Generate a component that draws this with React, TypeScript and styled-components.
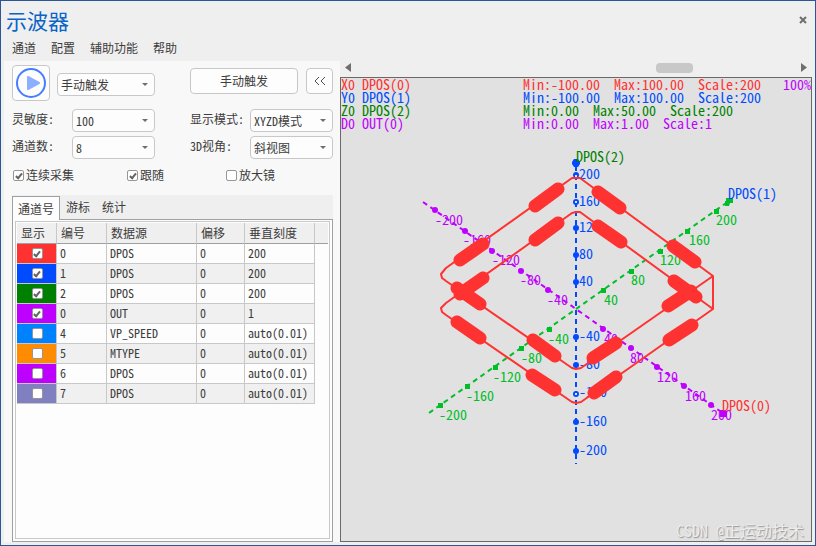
import React from "react";
import styled, { createGlobalStyle } from "styled-components";

const RED = "#ff3232";
const BLUE = "#004bff";
const GREEN = "#008000";
const AXIS_GREEN = "#00be28";
const PURPLE = "#be00ff";

const Global = createGlobalStyle`
  *, *::before, *::after { box-sizing: border-box; }
  body { margin: 0; }
  body, button, select, input {
    font-family: "Noto Sans CJK SC", "Liberation Sans", sans-serif;
    font-size: 12px;
    line-height: 16px;
    font-feature-settings: "hwid" 1;
    color: #3c3c3c;
  }
`;

const Window = styled.div`
  min-height: 100vh;
  display: flex;
  flex-direction: column;
  padding: 0 3px 3px;
  background: #efefef;
  border: 1px solid #2b579a;
`;

const TitleBar = styled.header`
  display: flex;
  align-items: center;
  justify-content: space-between;
  height: 38px;
  padding: 0 3px 0 2px;
`;

const Title = styled.h1`
  margin: 0;
  font-size: 21px;
  line-height: 28px;
  font-weight: 400;
  color: #0a64c8;
`;

const CloseButton = styled.button`
  display: grid;
  place-items: center;
  width: 12px;
  height: 12px;
  padding: 0;
  border: 0;
  background: none;
`;

const MenuBar = styled.nav`
  display: flex;
  gap: 15px;
  height: 22px;
  padding: 1px 8px 0;
`;

const MenuItem = styled.button`
  padding: 0;
  height: 16px;
  border: 0;
  background: none;
`;

const Main = styled.main`
  flex: 1;
  display: grid;
  grid-template-columns: 336px minmax(0, 1fr);
`;

const Sidebar = styled.section`
  display: flex;
  flex-direction: column;
  padding: 4px 7px 0 8px;
  background: #f8f8f8;
`;

const ControlRow = styled.div<{ $gap: number }>`
  display: grid;
  grid-template-columns: 143px 143px;
  justify-content: space-between;
  margin-bottom: ${(p) => p.$gap}px;
`;

const Group = styled.div<{ $top?: number }>`
  display: flex;
  align-items: ${(p) => (p.$top ? "flex-start" : "center")};
  justify-content: space-between;
  padding-top: ${(p) => p.$top ?? 0}px;
`;

const PushButton = styled.button<{ $width: number; $height: number }>`
  display: grid;
  place-items: center;
  width: ${(p) => p.$width}px;
  height: ${(p) => p.$height}px;
  padding: 0;
  border: 1px solid #c8c8c8;
  border-radius: 4px;
  background: #fdfdfd;
`;

const FieldLabel = styled.label`
  line-height: 20px;
  padding-bottom: 3px;
`;

const ComboBox = styled.span<{ $width: number; $top?: number }>`
  position: relative;
  display: block;
  width: ${(p) => p.$width}px;
  margin-top: ${(p) => p.$top ?? 0}px;

  &::after {
    content: "";
    position: absolute;
    right: 7px;
    top: 10px;
    border: 3px solid transparent;
    border-top-color: #6e6e6e;
    border-bottom: 0;
    pointer-events: none;
  }
`;

const Select = styled.select`
  appearance: none;
  display: block;
  width: 100%;
  height: 23px;
  padding: 0 12px 0 3px;
  border: 1px solid #c8c8c8;
  border-radius: 4px;
  background: #fdfdfd;
`;

const CheckRow = styled.div`
  display: grid;
  grid-template-columns: 114px 99px 1fr;
  padding: 0 0 0 1px;
  margin-top: 4px;
`;

const CheckLabel = styled.label`
  display: flex;
  align-items: center;
  gap: 2px;
`;

const CheckBox = styled.input`
  appearance: none;
  display: grid;
  flex: none;
  place-items: center;
  width: 11px;
  height: 11px;
  margin: 0;
  border: 1px solid #969696;
  border-radius: 2px;
  background: #fff;

  &:checked::after {
    content: "";
    width: 4px;
    height: 7px;
    border: solid #646464;
    border-width: 0 2px 2px 0;
    transform: rotate(40deg);
  }
`;

const TabStrip = styled.div`
  display: flex;
  align-items: flex-end;
  height: 24px;
  margin-top: 12px;
  background: #efefef;
`;

const Tab = styled.button<{ $active?: boolean }>`
  height: 24px;
  padding: 0 6px;
  border: 0;
  background: none;
  ${(p) =>
    p.$active
      ? `border: 1px solid #a0a0a0; border-bottom: 0; background: #fdfdfd;
         padding: 0 5px; margin-bottom: -1px; position: relative;`
      : ""}
`;

const TabPanel = styled.div`
  flex: 1;
  display: flex;
  padding: 1px 2px 2px;
  border: 1px solid #a0a0a0;
  background: #fdfdfd;
`;

const TableFrame = styled.div`
  flex: 1;
  padding: 1px;
  border: 1px solid #c8c8c8;
`;

const Table = styled.table`
  width: 100%;
  table-layout: fixed;
  border-collapse: separate;
  border-spacing: 0;
`;

const HeadCell = styled.th<{ $width?: number }>`
  width: ${(p) => (p.$width ? `${p.$width}px` : "auto")};
  height: 21px;
  padding: 0 0 0 4px;
  border-bottom: 1px solid #a0a0a0;
  border-right: ${(p) => (p.$width ? "1px solid #c8c8c8" : "0")};
  background: #efefef;
  font-weight: 400;
  line-height: 18px;
  text-align: left;
`;

const Row = styled.tr`
  &:nth-child(even) { background: #f0f0f0; }
`;

const Cell = styled.td`
  height: 20px;
  padding: 0 0 1px 3px;
  border-right: 1px solid #c8c8c8;
  border-bottom: 1px solid #c8c8c8;
  line-height: 18px;
  white-space: nowrap;
`;

const SwatchCell = styled(Cell)<{ $color: string }>`
  padding: 0 0 0 1px;
  background: ${(p) => p.$color};

  ${CheckBox} { margin: 0 auto; }
`;

const EmptyCell = styled.td`
  padding: 0;
  background: #fdfdfd;
`;

const Scope = styled.section`
  display: flex;
  flex-direction: column;
`;

const ScrollBar = styled.div`
  display: flex;
  align-items: center;
  height: 16px;
  padding: 0 5px 3px;
`;

const ScrollArrow = styled.button`
  display: flex;
  width: 6px;
  height: 9px;
  padding: 0;
  border: 0;
  background: none;
`;

const ScrollSpace = styled.span<{ $share: number }>`
  flex: ${(p) => p.$share};
`;

const ScrollThumb = styled.span`
  width: 37px;
  height: 10px;
  border-radius: 4px;
  background: #c8c8c8;
`;

const Screen = styled.div`
  position: relative;
  flex: 1;
  border: 1px solid #696969;
  background: #e1e1e1;
  font-size: 14px;
`;

const Legend = styled.div`
  position: relative;
  display: grid;
  grid-template-columns: 182px 1fr auto;
`;

const LegendText = styled.span<{ $color: string }>`
  color: ${(p) => p.$color};
  line-height: 13px;
  white-space: pre;
`;

const Plot = styled.svg`
  position: absolute;
  inset: 0;
  width: 100%;
  height: 100%;
`;

const Watermark = styled.div`
  position: absolute;
  right: 7px;
  bottom: 1px;
  font-size: 16px;
  line-height: 20px;
  color: #ececec;
  text-shadow: 1px 1px 1px #969696;
`;

const channels = [
  { color: RED, on: true, id: "0", source: "DPOS", scale: "200" },
  { color: BLUE, on: true, id: "1", source: "DPOS", scale: "200" },
  { color: GREEN, on: true, id: "2", source: "DPOS", scale: "200" },
  { color: PURPLE, on: true, id: "0", source: "OUT", scale: "1" },
  { color: "#0082ff", on: false, id: "4", source: "VP_SPEED", scale: "auto(0.01)" },
  { color: "#ff8c00", on: false, id: "5", source: "MTYPE", scale: "auto(0.01)" },
  { color: PURPLE, on: false, id: "6", source: "DPOS", scale: "auto(0.01)" },
  { color: "#8080c0", on: false, id: "7", source: "DPOS", scale: "auto(0.01)" },
];

const legend = [
  { color: RED, name: "X0 DPOS(0)", stats: "Min:-100.00  Max:100.00  Scale:200", zoom: "100%" },
  { color: BLUE, name: "Y0 DPOS(1)", stats: "Min:-100.00  Max:100.00  Scale:200", zoom: "" },
  { color: GREEN, name: "Z0 DPOS(2)", stats: "Min:0.00  Max:50.00  Scale:200", zoom: "" },
  { color: PURPLE, name: "D0 OUT(0)", stats: "Min:0.00  Max:1.00  Scale:1", zoom: "" },
];

// Ticks: node x, node y, label x, label centre y, text
type Tick = [number, number, number, number, string];

const blueTicks: Tick[] = [
  [576, 175, 579, 174, "200"],
  [576, 202, 579, 201, "160"],
  [576, 228, 579, 227, "120"],
  [576, 255, 579, 254, "80"],
  [576, 282, 579, 281, "40"],
  [576, 337, 579, 336, "-40"],
  [576, 365, 579, 364, "-80"],
  [576, 394, 579, 392, "-120"],
  [576, 422, 579, 421, "-160"],
  [576, 451, 579, 450, "-200"],
];
const purpleTicks: Tick[] = [
  [435, 210, 435, 220, "-200"],
  [465, 231, 463, 240, "-160"],
  [492, 251, 492, 260, "-120"],
  [521, 271, 520, 280, "-80"],
  [548, 290, 547, 300, "-40"],
  [603, 329, 604, 339, "40"],
  [631, 348, 630, 358, "80"],
  [657, 367, 657, 377, "120"],
  [684, 386, 685, 396, "160"],
  [711, 405, 711, 415, "200"],
];
const greenTicks: Tick[] = [
  [440, 405, 439, 415, "-200"],
  [467, 386, 466, 396, "-160"],
  [495, 367, 493, 377, "-120"],
  [521, 348, 521, 358, "-80"],
  [549, 329, 548, 339, "-40"],
  [603, 290, 604, 300, "40"],
  [631, 271, 631, 280, "80"],
  [660, 251, 660, 260, "120"],
  [687, 231, 689, 240, "160"],
  [716, 211, 716, 220, "200"],
];

const strokes = [
  "M535 206L558 189", "M460 260L483 244",
  "M535 240L558 223", "M460 294L483 278",
  "M457 288L480 304", "M533 340L555 356",
  "M457 322L480 338", "M532 375L555 390",
  "M598 192L620 208", "M673 246L695 262",
  "M598 226L621 242", "M674 281L696 297",
  "M668 306L691 291", "M593 358L616 343",
  "M669 340L692 325", "M594 393L616 377",
];

function Axis({ ticks, color, line, round }: { ticks: Tick[]; color: string; line: string; round?: boolean }) {
  return (
    <g fill={color}>
      <path d={line} stroke={color} strokeWidth={2} strokeDasharray="5 4" fill="none" />
      {ticks.map(([x, y, lx, ly, text]) => (
        <g key={text}>
          {round ? <circle cx={x} cy={y} r={3} /> : <rect x={x - 2} y={y - 2} width={5} height={5} />}
          <text x={lx} y={ly + 5}>{text}</text>
        </g>
      ))}
    </g>
  );
}

function ScopePlot() {
  return (
    <Plot viewBox="341 78 470 463" fontSize={14} role="img" aria-label="XYZD">
      <Axis ticks={greenTicks} color={AXIS_GREEN} line="M429 413L576 309L729 201" />
      <path d="M726 198h7v5h-3l-1 3h-4v-5h1z" fill={AXIS_GREEN} />
      <Axis ticks={purpleTicks} color={PURPLE} line="M423 202L576 309L724 414" round />
      <path d="M720 410h6v1h1v6h-7z" fill={PURPLE} />
      <Axis ticks={blueTicks} color={BLUE} line="M576 166V464" round />
      <path d="M572 162l2-3h4l2 3v2l-2 3h-4l-2-3z" fill={BLUE} />
      <g fill="#e1e1e1">
        <rect x="575" y="175" width="2" height="2" />
        <rect x="575" y="201" width="2" height="2" />
        <rect x="575" y="393" width="2" height="2" />
      </g>
      <g fill="none" stroke={RED} strokeWidth={2} strokeLinejoin="round">
        <path d="M576 178L572 178L446 268L441 274L442 278L446 281L572 368L576 369L581 368L713 276L580 178Z" />
        <path d="M576 212L572 213L446 303L441 308L442 312L446 315L572 402L576 403L581 402L713 309L580 212Z" />
        <path d="M713 276V309" />
        <path d={strokes.join("")} strokeWidth={13} strokeLinecap="round" />
      </g>
      <text x={576} y={162} fill={GREEN}>DPOS(2)</text>
      <text x={728} y={199} fill={BLUE}>DPOS(1)</text>
      <text x={722} y={411} fill={RED}>DPOS(0)</text>
    </Plot>
  );
}

function Combo({ id, label, value, width, top }: { id: string; label?: string; value: string; width: number; top?: number }) {
  return (
    <>
      {label && <FieldLabel htmlFor={id}>{label}</FieldLabel>}
      <ComboBox $width={width} $top={top}>
        <Select id={id} defaultValue={value} aria-label={label ? undefined : value}>
          <option>{value}</option>
        </Select>
      </ComboBox>
    </>
  );
}

function Check({ label, checked }: { label: string; checked?: boolean }) {
  return (
    <CheckLabel>
      <CheckBox type="checkbox" defaultChecked={checked} />
      {label}
    </CheckLabel>
  );
}

export default function App() {
  return (
    <>
      <Global />
      <Window>
        <TitleBar>
          <Title>示波器</Title>
          <CloseButton aria-label="关闭">
            <svg width="8" height="8" viewBox="0 0 8 8">
              <path d="M1 1L7 7M7 1L1 7" stroke="#6e6e6e" strokeWidth="2" />
            </svg>
          </CloseButton>
        </TitleBar>
        <MenuBar>
          {["通道", "配置", "辅助功能", "帮助"].map((m) => (
            <MenuItem key={m}>{m}</MenuItem>
          ))}
        </MenuBar>
        <Main>
          <Sidebar>
            <ControlRow $gap={8}>
              <Group>
                <PushButton $width={38} $height={36} aria-label="启动">
                  <svg width="32" height="32" viewBox="0 0 32 32">
                    <circle cx="16" cy="16" r="14" fill="none" stroke="#467dff" strokeWidth="2" />
                    <path d="M13 10L24 16L13 22Z" fill="#8cafff" stroke="#8cafff" strokeWidth="2" strokeLinejoin="round" />
                  </svg>
                </PushButton>
                <Combo id="trigger" value="手动触发" width={98} top={3} />
              </Group>
              <Group $top={3}>
                <PushButton $width={108} $height={26}>手动触发</PushButton>
                <PushButton $width={27} $height={26} aria-label="收起">
                  <svg width="12" height="10" viewBox="0 0 12 10">
                    <path d="M5 1L1 5L5 9M11 1L7 5L11 9" fill="none" stroke="#505050" />
                  </svg>
                </PushButton>
              </Group>
            </ControlRow>
            <ControlRow $gap={4}>
              <Group><Combo id="sensitivity" label="灵敏度:" value="100" width={83} /></Group>
              <Group><Combo id="mode" label="显示模式:" value="XYZD模式" width={83} /></Group>
            </ControlRow>
            <ControlRow $gap={4}>
              <Group><Combo id="count" label="通道数:" value="8" width={83} /></Group>
              <Group><Combo id="view" label="3D视角:" value="斜视图" width={83} /></Group>
            </ControlRow>
            <CheckRow>
              <Check label="连续采集" checked />
              <Check label="跟随" checked />
              <Check label="放大镜" />
            </CheckRow>
            <TabStrip role="tablist">
              <Tab role="tab" aria-selected $active>通道号</Tab>
              <Tab role="tab">游标</Tab>
              <Tab role="tab">统计</Tab>
            </TabStrip>
            <TabPanel role="tabpanel">
              <TableFrame>
                <Table>
                  <thead>
                    <tr>
                      <HeadCell $width={40}>显示</HeadCell>
                      <HeadCell $width={50}>编号</HeadCell>
                      <HeadCell $width={90}>数据源</HeadCell>
                      <HeadCell $width={48}>偏移</HeadCell>
                      <HeadCell $width={70}>垂直刻度</HeadCell>
                      <HeadCell />
                    </tr>
                  </thead>
                  <tbody>
                    {channels.map((c, i) => (
                      <Row key={i}>
                        <SwatchCell $color={c.color}>
                          <CheckBox type="checkbox" defaultChecked={c.on} aria-label={`显示 ${c.id} ${c.source}`} />
                        </SwatchCell>
                        <Cell>{c.id}</Cell>
                        <Cell>{c.source}</Cell>
                        <Cell>0</Cell>
                        <Cell>{c.scale}</Cell>
                        <EmptyCell />
                      </Row>
                    ))}
                  </tbody>
                </Table>
              </TableFrame>
            </TabPanel>
          </Sidebar>
          <Scope>
            <ScrollBar>
              <ScrollArrow aria-label="向左">
                <svg width="6" height="9" viewBox="0 0 6 9"><path d="M6 0V9L0 4.5Z" fill="#6e6e6e" /></svg>
              </ScrollArrow>
              <ScrollSpace $share={305} />
              <ScrollThumb />
              <ScrollSpace $share={108} />
              <ScrollArrow aria-label="向右">
                <svg width="6" height="9" viewBox="0 0 6 9"><path d="M0 0V9L6 4.5Z" fill="#6e6e6e" /></svg>
              </ScrollArrow>
            </ScrollBar>
            <Screen>
              <ScopePlot />
              <Legend>
                {legend.map((l) => (
                  <React.Fragment key={l.name}>
                    <LegendText $color={l.color}>{l.name}</LegendText>
                    <LegendText $color={l.color}>{l.stats}</LegendText>
                    <LegendText $color={PURPLE}>{l.zoom}</LegendText>
                  </React.Fragment>
                ))}
              </Legend>
              <Watermark>CSDN @正运动技术</Watermark>
            </Screen>
          </Scope>
        </Main>
      </Window>
    </>
  );
}
